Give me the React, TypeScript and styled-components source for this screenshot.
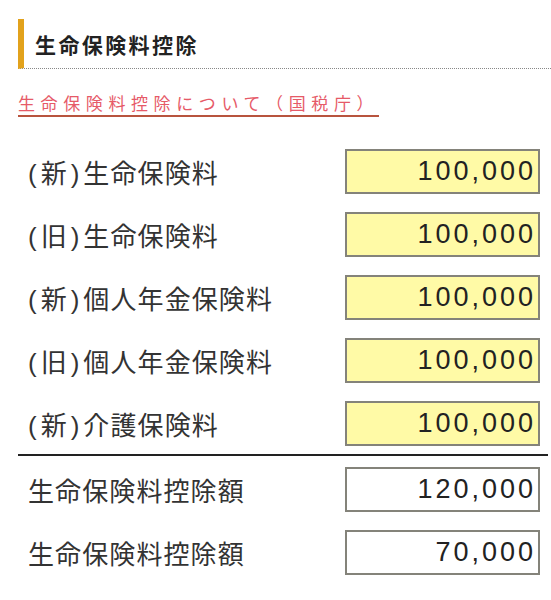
import React from 'react';
import styled, { createGlobalStyle } from 'styled-components';

const GlobalStyle = createGlobalStyle`
  body {
    margin: 0;
    background: #fff;
    font-family: "Liberation Sans", "Noto Sans CJK JP", sans-serif;
    color: #333;
  }
`;

const rows: { prefix?: string, label: string, value: string }[] = [
  { prefix: '(新)', label: '生命保険料', value: '100,000' },
  { prefix: '(旧)', label: '生命保険料', value: '100,000' },
  { prefix: '(新)', label: '個人年金保険料', value: '100,000' },
  { prefix: '(旧)', label: '個人年金保険料', value: '100,000' },
  { prefix: '(新)', label: '介護保険料', value: '100,000' },
];

const results: { prefix?: string, label: string, value: string }[] = [
  { label: '生命保険料控除額', value: '120,000' },
  { label: '生命保険料控除額', value: '70,000' },
];

const Page = styled.div`
  padding: 19px 0 0 18px;
`;

const Heading = styled.h2`
  margin: 0;
  height: 49px;
  display: flex;
  align-items: center;
  padding-left: 11px;
  border-left: 6px solid #e2a21c;
  border-bottom: 1px dotted #888;
  font-size: 21px;
  font-weight: bold;
  letter-spacing: 2.4px;
  color: #222;
`;

const Link = styled.a`
  display: inline-block;
  margin-top: 26px;
  font-size: 17px;
  line-height: 20px;
  letter-spacing: 5.6px;
  color: #e65a68;
  text-decoration: none;
  border-bottom: 2px solid #b8543e;
`;

const Form = styled.div`
  margin-top: 32px;
  padding-right: 3px;
`;

const Group = styled.div`
  display: flex;
  flex-direction: column;
  gap: 18px;
`;

const Row = styled.div`
  display: flex;
  align-items: center;
  justify-content: space-between;
  padding: 0 8px 0 10px;
`;

const Label = styled.span`
  font-size: 26px;
  letter-spacing: 1.1px;
  color: #333;
`;

const Prefix = styled.span`
  letter-spacing: 4px;
`;

const Value = styled.input<{ $editable?: boolean }>`
  box-sizing: border-box;
  width: 195px;
  height: 45px;
  border: 2px solid #84837a;
  background: ${p => (p.$editable ? '#fffaa6' : '#fff')};
  font-family: "Liberation Sans", sans-serif;
  font-size: 27px;
  letter-spacing: 3px;
  color: #222;
  text-align: right;
  padding: 0 2px 0 0;
  outline: none;
`;

const Separator = styled.hr`
  margin: 8px 0 11px;
  border: none;
  border-top: 2px solid #222;
`;

const Field = ({ prefix, label, value, editable }: { prefix?: string, label: string, value: string, editable?: boolean }) => (
  <Row>
    <Label>
      {prefix && <Prefix>{prefix}</Prefix>}
      {label}
    </Label>
    <Value $editable={editable} readOnly value={value} />
  </Row>
);

export default function App() {
  return (
    <Page>
      <GlobalStyle />
      <Heading>生命保険料控除</Heading>
      <Link href="#">生命保険料控除について（国税庁）</Link>
      <Form>
        <Group>
          {rows.map((r, i) => (
            <Field key={i} {...r} editable />
          ))}
        </Group>
        <Separator />
        <Group>
          {results.map((r, i) => (
            <Field key={i} {...r} />
          ))}
        </Group>
      </Form>
    </Page>
  );
}
